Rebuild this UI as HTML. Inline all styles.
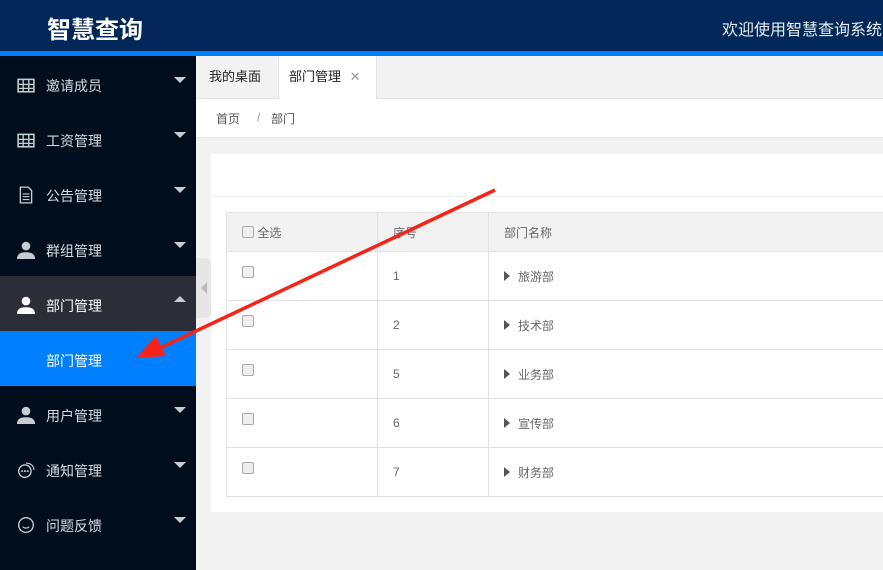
<!DOCTYPE html>
<html><head><meta charset="utf-8"><style>
*{margin:0;padding:0;box-sizing:border-box}
body{width:883px;height:570px;overflow:hidden;position:relative;background:#f2f2f2;font-family:"Liberation Sans","Noto Sans CJK SC",sans-serif;font-size:13px;color:#333}
.hd{position:absolute;left:0;top:0;width:883px;height:51px;background:#012858}
.hd .logo{position:absolute;left:47px;top:10px;color:#fff;font-size:24px;font-weight:bold}
.hd .wel{position:absolute;left:722px;top:16px;color:#e8ecf2;font-size:16px;white-space:nowrap}
.bar{position:absolute;left:0;top:51px;width:883px;height:5px;background:#0080ff}
.sb{position:absolute;left:0;top:56px;width:196px;height:514px;background:#000d1c}
.it{position:absolute;left:0;width:196px;height:55px;color:#d6dbe2;font-size:14px}
.it .t{position:absolute;left:46px;top:20px}
.it .ic{position:absolute;left:17px;top:20px;width:18px;height:18px}
.it .ar{position:absolute;left:174px;top:21px;width:0;height:0;border-left:6px solid transparent;border-right:6px solid transparent;border-top:6px solid #c8ccd2}
.it .up{border-top:none;border-bottom:6px solid #c8ccd2;top:20px}
.tabs{position:absolute;left:196px;top:56px;width:687px;height:43px;background:#f2f2f2;border-bottom:1px solid #e2e2e2}
.tab{position:absolute;top:0;height:43px;line-height:42px;font-size:13px;color:#222}
.bc{position:absolute;left:196px;top:99px;width:687px;height:39px;background:#fff;border-bottom:1px solid #e6e6e6;font-size:12px;color:#555}
.card{position:absolute;left:211px;top:154px;width:672px;height:358px;background:#fff}
.card .ln{position:absolute;left:0;top:42px;width:672px;height:1px;background:#f0f0f0}
table{position:absolute;left:226px;top:212px;width:680px;border-collapse:collapse;font-size:12px;color:#666}
td,th{border:1px solid #e2e2e2;height:49px;text-align:left;font-weight:normal;padding-left:15px;vertical-align:middle}
th{height:39px;background:#f2f2f2;color:#666}
td .cb{position:relative;top:-3px}
.cb{display:inline-block;width:12px;height:12px;border:1px solid #aaa;border-radius:2px;background:#eee;vertical-align:-1px}
.tri{display:inline-block;width:0;height:0;border-top:5px solid transparent;border-bottom:5px solid transparent;border-left:6px solid #555;margin-right:8px;vertical-align:0}
</style></head><body>
<div class="hd"><div class="logo">智慧查询</div><div class="wel">欢迎使用智慧查询系统</div></div>
<div class="bar"></div>
<div class="sb">
 <div class="it" style="top:0"><svg class="ic" viewBox="0 0 16 16"><rect x="1" y="3" width="14" height="11" fill="none" stroke="#c8ccd2" stroke-width="1.4"/><path d="M1 7.5H15M1 11H15M5.5 3V14M10.5 3V14" stroke="#c8ccd2" stroke-width="1.2"/></svg><span class="t">邀请成员</span><i class="ar"></i></div>
 <div class="it" style="top:55px"><svg class="ic" viewBox="0 0 16 16"><rect x="1" y="3" width="14" height="11" fill="none" stroke="#c8ccd2" stroke-width="1.4"/><path d="M1 7.5H15M1 11H15M5.5 3V14M10.5 3V14" stroke="#c8ccd2" stroke-width="1.2"/></svg><span class="t">工资管理</span><i class="ar"></i></div>
 <div class="it" style="top:110px"><svg class="ic" viewBox="0 0 16 16"><path d="M3 1H10L13 4V15H3Z" fill="none" stroke="#c8ccd2" stroke-width="1.2"/><path d="M5 7H11M5 9.5H11M5 12H11" stroke="#c8ccd2"/></svg><span class="t">公告管理</span><i class="ar"></i></div>
 <div class="it" style="top:165px"><svg class="ic" viewBox="0 0 16 16"><circle cx="8" cy="4.5" r="3.8" fill="#c8ccd2"/><path d="M0 16C0 11 4 10 8 10S16 11 16 16Z" fill="#c8ccd2"/></svg><span class="t">群组管理</span><i class="ar"></i></div>
 <div class="it" style="top:220px;background:#2b2e37;color:#fff"><svg class="ic" viewBox="0 0 16 16"><circle cx="8" cy="4.5" r="3.8" fill="#fff"/><path d="M0 16C0 11 4 10 8 10S16 11 16 16Z" fill="#fff"/></svg><span class="t">部门管理</span><i class="ar up"></i></div>
 <div class="it" style="top:275px;background:#0080ff;color:#fff"><span class="t">部门管理</span></div>
 <div class="it" style="top:330px"><svg class="ic" viewBox="0 0 16 16"><circle cx="8" cy="4.5" r="3.8" fill="#c8ccd2"/><path d="M0 16C0 11 4 10 8 10S16 11 16 16Z" fill="#c8ccd2"/></svg><span class="t">用户管理</span><i class="ar"></i></div>
 <div class="it" style="top:385px"><svg class="ic" viewBox="0 0 16 16"><circle cx="7" cy="9" r="5.5" fill="none" stroke="#c8ccd2" stroke-width="1.2"/><path d="M8 2A6 6 0 0 1 15 8" fill="none" stroke="#c8ccd2"/><circle cx="4.5" cy="9" r=".9" fill="#c8ccd2"/><circle cx="7" cy="9" r=".9" fill="#c8ccd2"/><circle cx="9.5" cy="9" r=".9" fill="#c8ccd2"/></svg><span class="t">通知管理</span><i class="ar"></i></div>
 <div class="it" style="top:440px"><svg class="ic" viewBox="0 0 16 16"><circle cx="8" cy="8" r="6.5" fill="none" stroke="#c8ccd2" stroke-width="1.2"/><path d="M5 9.5Q8 12 11 9.5" fill="none" stroke="#c8ccd2"/></svg><span class="t">问题反馈</span><i class="ar"></i></div>
</div>
<div style="position:absolute;left:196px;top:258px;width:16px;height:60px;background:#e6e6e6;border-radius:0 8px 8px 0"></div>
<div style="position:absolute;left:201px;top:282px;width:0;height:0;border-top:6px solid transparent;border-bottom:6px solid transparent;border-right:6px solid #bbb"></div>
<div class="tabs">
 <div class="tab" style="left:0;width:82px;padding-left:13px">我的桌面</div>
 <div class="tab" style="left:82px;width:99px;background:#fff;padding-left:10px;border-left:1px solid #e2e2e2;border-right:1px solid #e2e2e2;height:44px">部门管理 <span style="color:#999;margin-left:5px">✕</span></div>
</div>
<div class="bc"><span style="position:absolute;left:20px;top:11px">首页</span><span style="position:absolute;left:61px;top:11px;color:#999">/</span><span style="position:absolute;left:75px;top:11px">部门</span></div>
<div class="card"><div class="ln"></div></div>
<table>
<tr><th style="width:151px"><span class="cb"></span> 全选</th><th style="width:111px">序号</th><th>部门名称</th></tr>
<tr><td><span class="cb"></span></td><td>1</td><td><span class="tri"></span>旅游部</td></tr>
<tr><td><span class="cb"></span></td><td>2</td><td><span class="tri"></span>技术部</td></tr>
<tr><td><span class="cb"></span></td><td>5</td><td><span class="tri"></span>业务部</td></tr>
<tr><td><span class="cb"></span></td><td>6</td><td><span class="tri"></span>宣传部</td></tr>
<tr><td><span class="cb"></span></td><td>7</td><td><span class="tri"></span>财务部</td></tr>
</table>
<svg style="position:absolute;left:0;top:0" width="883" height="570"><path d="M495 190L160 348" stroke="#f5231a" stroke-width="3.5"/><path d="M136 358L156 336L166 356Z" fill="#f5231a"/></svg>
</body></html>
